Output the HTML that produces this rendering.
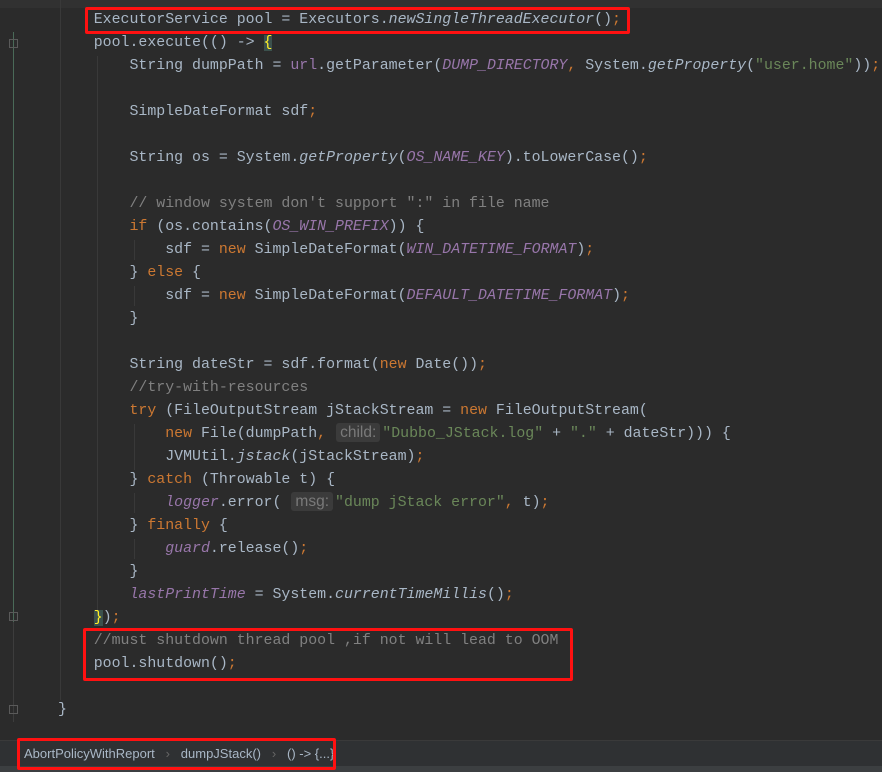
<!DOCTYPE html>
<html><head><meta charset="utf-8"><style>
body{margin:0;width:882px;height:772px;background:#2b2b2b;overflow:hidden;position:relative;font-family:"Liberation Mono",monospace;}
.top{position:absolute;left:0;top:0;width:882px;height:8px;background:#313131}
.code{position:absolute;left:58px;top:9px;font-size:14.9px;color:#a9b7c6;line-height:23px}
.l{height:23px;white-space:pre}
.k{color:#cc7832}.s{color:#6a8759}.c{color:#808080}.p{color:#9876aa}.pi{color:#9876aa;font-style:italic}.i{font-style:italic}
.h{display:inline-block;background:#3b3b3b;color:#7a7a7a;font-family:"Liberation Sans",sans-serif;font-size:15.5px;line-height:19px;padding:0 4px;border-radius:3px;margin:0 2px 0 10px}
.br{background:#3b514d;color:#ffef28}
.g{position:absolute;width:1px;background:#393939}
.box{position:absolute;border:3px solid #f11;border-radius:2px}
.bar{position:absolute;left:0;top:740px;width:882px;height:26px;background:#2f3133;border-top:1px solid #3a3a3a;font-family:"Liberation Sans",sans-serif;font-size:13px;color:#a9b7c6}
.bottom{position:absolute;left:0;top:766px;width:882px;height:6px;background:#3c3f41}
.fold{position:absolute;left:9px;width:9px;height:9px;border:1px solid #5a5a5a;box-sizing:border-box}
</style></head><body>
<div class="top"></div>
<div style="position:absolute;left:13px;top:32px;width:1px;height:590px;background:#4a6a58"></div>
<div style="position:absolute;left:13px;top:622px;width:1px;height:100px;background:#3d3d3d"></div>
<div class="fold" style="top:39px"></div>
<div class="fold" style="top:612px"></div>
<div class="fold" style="top:705px"></div>
<div class="g" style="left:60px;top:0;height:700px"></div>
<div class="g" style="left:97px;top:56px;height:560px"></div>
<div class="g" style="left:134px;top:240px;height:20px"></div>
<div class="g" style="left:134px;top:286px;height:20px"></div>
<div class="g" style="left:134px;top:424px;height:46px"></div>
<div class="g" style="left:134px;top:493px;height:20px"></div>
<div class="g" style="left:134px;top:539px;height:20px"></div>
<div class="code"><div class="l">    ExecutorService pool = Executors.<span class="i">newSingleThreadExecutor</span>()<span class="k">;</span></div><div class="l">    pool.execute(() -&gt; <span class="br">{</span></div><div class="l">        String dumpPath = <span class="p">url</span>.getParameter(<span class="pi">DUMP_DIRECTORY</span><span class="k">, </span>System.<span class="i">getProperty</span>(<span class="s">"user.home"</span>))<span class="k">;</span></div><div class="l"></div><div class="l">        SimpleDateFormat sdf<span class="k">;</span></div><div class="l"></div><div class="l">        String os = System.<span class="i">getProperty</span>(<span class="pi">OS_NAME_KEY</span>).toLowerCase()<span class="k">;</span></div><div class="l"></div><div class="l">        <span class="c">// window system don't support ":" in file name</span></div><div class="l">        <span class="k">if </span>(os.contains(<span class="pi">OS_WIN_PREFIX</span>)) {</div><div class="l">            sdf = <span class="k">new </span>SimpleDateFormat(<span class="pi">WIN_DATETIME_FORMAT</span>)<span class="k">;</span></div><div class="l">        } <span class="k">else </span>{</div><div class="l">            sdf = <span class="k">new </span>SimpleDateFormat(<span class="pi">DEFAULT_DATETIME_FORMAT</span>)<span class="k">;</span></div><div class="l">        }</div><div class="l"></div><div class="l">        String dateStr = sdf.format(<span class="k">new </span>Date())<span class="k">;</span></div><div class="l">        <span class="c">//try-with-resources</span></div><div class="l">        <span class="k">try </span>(FileOutputStream jStackStream = <span class="k">new </span>FileOutputStream(</div><div class="l">            <span class="k">new </span>File(dumpPath<span class="k">,</span><span class="h">child:</span><span class="s">"Dubbo_JStack.log"</span> + <span class="s">"."</span> + dateStr))) {</div><div class="l">            JVMUtil.<span class="i">jstack</span>(jStackStream)<span class="k">;</span></div><div class="l">        } <span class="k">catch </span>(Throwable t) {</div><div class="l">            <span class="pi">logger</span>.error(<span class="h">msg:</span><span class="s">"dump jStack error"</span><span class="k">, </span>t)<span class="k">;</span></div><div class="l">        } <span class="k">finally </span>{</div><div class="l">            <span class="pi">guard</span>.release()<span class="k">;</span></div><div class="l">        }</div><div class="l">        <span class="pi">lastPrintTime</span> = System.<span class="i">currentTimeMillis</span>()<span class="k">;</span></div><div class="l">    <span class="br">}</span>)<span class="k">;</span></div><div class="l">    <span class="c">//must shutdown thread pool ,if not will lead to OOM</span></div><div class="l">    pool.shutdown()<span class="k">;</span></div><div class="l"></div><div class="l">}</div></div>
<div class="bar"><div style="position:absolute;left:24px;top:5px;white-space:pre">AbortPolicyWithReport   <span style="color:#666">›</span>   dumpJStack()   <span style="color:#666">›</span>   () -&gt; {...}</div></div>
<div class="bottom"></div>
<div class="box" style="left:85px;top:7px;width:539px;height:21px"></div>
<div class="box" style="left:83px;top:628px;width:484px;height:47px"></div>
<div class="box" style="left:17px;top:738px;width:313px;height:26px"></div>
</body></html>
